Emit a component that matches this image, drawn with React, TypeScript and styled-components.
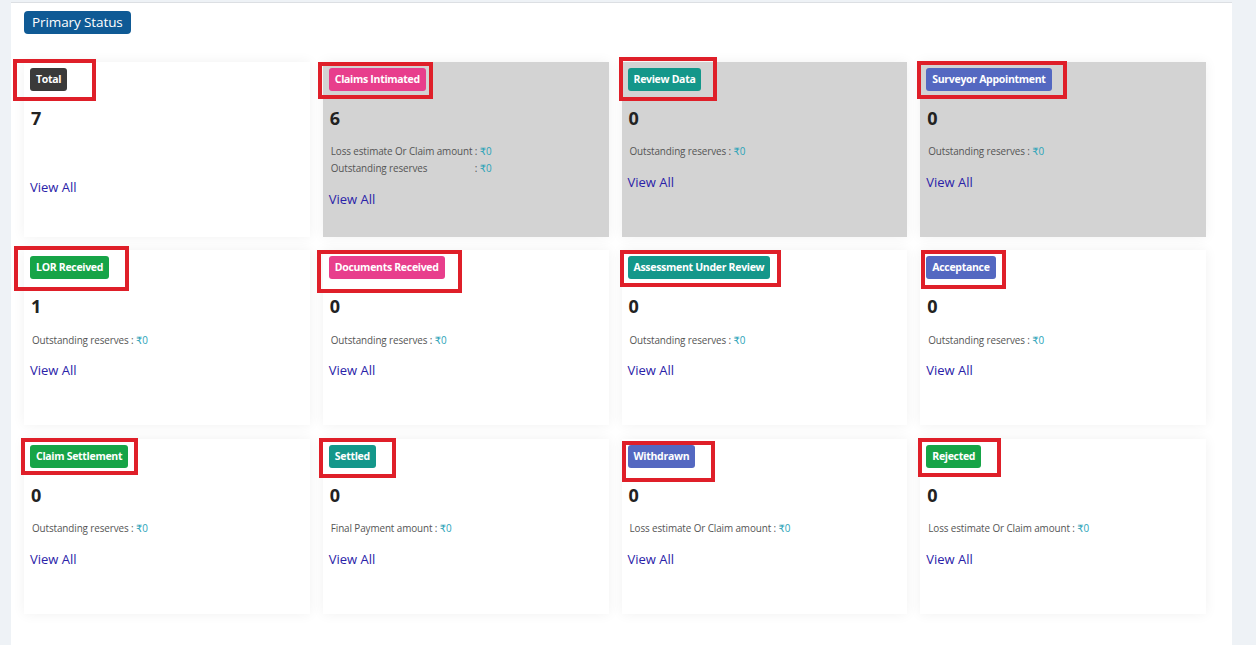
import React from "react";
import styled, { createGlobalStyle } from "styled-components";

const Global = createGlobalStyle`
  html, body { margin: 0; padding: 0; }
  body {
    background: #eef2f6;
    font-family: "Open Sans", "Noto Sans", "DejaVu Sans", sans-serif;
    width: 1256px;
    height: 645px;
    overflow: hidden;
  }
`;

const Page = styled.div`
  padding-top: 2px;
  height: 643px;
`;

const Panel = styled.main`
  margin-left: 11px;
  width: 1221px;
  height: 660px;
  background: #ffffff;
  border-top: 1px solid #dcdfe3;
  box-sizing: border-box;
  padding: 7px 0 0 13px;
`;

const SectionButton = styled.button`
  display: inline-flex;
  align-items: center;
  height: 23px;
  padding: 0 8px;
  border: none;
  border-radius: 4px;
  background: #0f5a95;
  color: #ffffff;
  font-family: "Open Sans", "Noto Sans", sans-serif;
  font-size: 13.5px;
  letter-spacing: -0.1px;
`;

const Grid = styled.div`
  margin-top: 28px;
  display: grid;
  width: 1182px;
  grid-template-columns: repeat(4, 1fr);
  grid-auto-rows: 175px;
  column-gap: 13px;
  row-gap: 13.5px;
`;

const Card = styled.div<{ $gray?: boolean }>`
  position: relative;
  display: flex;
  flex-direction: column;
  align-items: flex-start;
  padding: 6px;
  background: ${(p) => (p.$gray ? "#d3d3d3" : "#ffffff")};
  box-shadow: 0 0 12px rgba(0, 0, 0, 0.06);
`;

const Badge = styled.span<{ $color: string }>`
  display: inline-block;
  background: ${(p) => p.$color};
  color: #ffffff;
  font-family: "Open Sans", "Noto Sans", sans-serif;
  font-weight: 700;
  font-size: 10.5px;
  letter-spacing: -0.3px;
  line-height: 13px;
  padding: 5px 6px;
  border-radius: 3px;
`;

const Count = styled.div`
  margin-top: 16px;
  margin-left: 1px;
  font-size: 18px;
  font-weight: 700;
  line-height: 22px;
  color: #222222;
`;

const Details = styled.div`
  margin-top: 14.5px;
  margin-left: 2px;
  display: grid;
  grid-template-columns: max-content max-content max-content;
`;

const Cell = styled.span`
  font-size: 9.9px;
  line-height: 17px;
  color: #555555;
  letter-spacing: -0.1px;
  white-space: pre;
`;

const Amount = styled(Cell)`
  color: #2aa3b8;
  font-family: "Open Sans", "DejaVu Sans", sans-serif;
`;

const ViewAll = styled.a<{ $gap: number }>`
  margin-top: ${(p) => p.$gap}px;
  font-size: 13px;
  line-height: 19px;
  color: #2a22a8;
  text-decoration: none;
  cursor: pointer;
`;

const Highlight = styled.div`
  position: absolute;
  box-sizing: border-box;
  border: 4px solid #df1f29;
  pointer-events: none;
`;

type Item = {
  label: string;
  color: string;
  count: number;
  gray?: boolean;
  lines: string[];
  box: [number, number, number, number];
};

const PINK = "#e83e8c";
const TEAL = "#14978a";
const INDIGO = "#5468c1";
const GREEN = "#16a447";

const items: Item[] = [
  { label: "Total", color: "#3a3a3a", count: 7, lines: [], box: [-11, -3, 83, 42] },
  {
    label: "Claims Intimated",
    color: PINK,
    count: 6,
    gray: true,
    lines: ["Loss estimate Or Claim amount ", "Outstanding reserves"],
    box: [-5, 0, 115, 37],
  },
  { label: "Review Data", color: TEAL, count: 0, gray: true, lines: ["Outstanding reserves "], box: [-3, -5, 98, 44] },
  { label: "Surveyor Appointment", color: INDIGO, count: 0, gray: true, lines: ["Outstanding reserves "], box: [-3, -1, 150, 38] },
  { label: "LOR Received", color: GREEN, count: 1, lines: ["Outstanding reserves "], box: [-10, -4, 115, 45] },
  { label: "Documents Received", color: PINK, count: 0, lines: ["Outstanding reserves "], box: [-6, 0, 145, 43] },
  { label: "Assessment Under Review", color: TEAL, count: 0, lines: ["Outstanding reserves "], box: [-2, 0, 161, 37] },
  { label: "Acceptance", color: INDIGO, count: 0, lines: ["Outstanding reserves "], box: [1, 0, 85, 39] },
  { label: "Claim Settlement", color: GREEN, count: 0, lines: ["Outstanding reserves "], box: [-3, -1, 117, 37] },
  { label: "Settled", color: TEAL, count: 0, lines: ["Final Payment amount "], box: [-4, -1, 77, 40] },
  { label: "Withdrawn", color: INDIGO, count: 0, lines: ["Loss estimate Or Claim amount "], box: [0, 2, 93, 41] },
  { label: "Rejected", color: GREEN, count: 0, lines: ["Loss estimate Or Claim amount "], box: [-2, -1, 83, 39] },
];

export default function App() {
  return (
    <>
      <Global />
      <Page>
        <Panel>
          <SectionButton>Primary Status</SectionButton>
          <Grid>
            {items.map((it) => (
              <Card key={it.label} $gray={it.gray}>
                <Badge $color={it.color}>{it.label}</Badge>
                <Count>{it.count}</Count>
                {it.lines.length > 0 && (
                  <Details>
                    {it.lines.map((l) => (
                      <React.Fragment key={l}>
                        <Cell>{l}</Cell>
                        <Cell>: </Cell>
                        <Amount>₹0</Amount>
                      </React.Fragment>
                    ))}
                  </Details>
                )}
                <ViewAll $gap={it.lines.length ? 12.5 : 49}>View All</ViewAll>
                <Highlight
                  style={{
                    left: it.box[0],
                    top: it.box[1],
                    width: it.box[2],
                    height: it.box[3],
                  }}
                />
              </Card>
            ))}
          </Grid>
        </Panel>
      </Page>
    </>
  );
}
